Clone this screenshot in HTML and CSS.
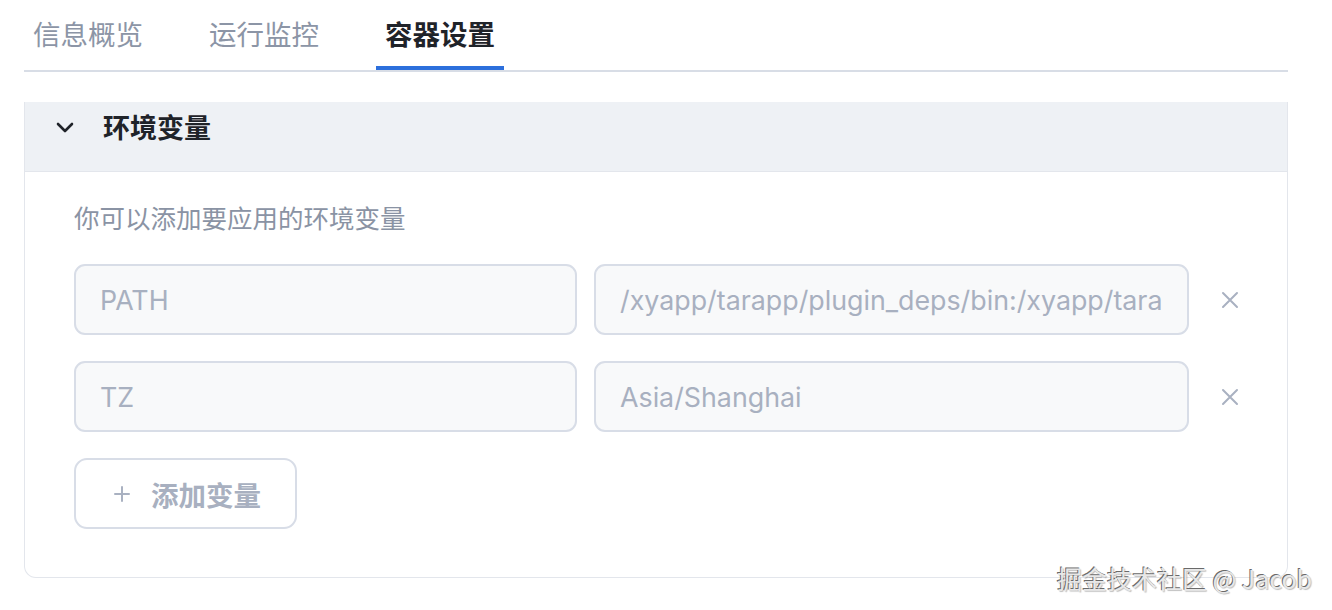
FILE: index.html
```html
<!DOCTYPE html>
<html lang="zh-CN">
<head>
<meta charset="utf-8">
<title>容器设置</title>
<link rel="stylesheet" href="styles.css">
</head>
<body>
<div class="page">
  <nav class="tabs">
    <div class="tab">信息概览</div>
    <div class="tab">运行监控</div>
    <div class="tab active">容器设置</div>
  </nav>

  <section class="panel">
    <header class="panel-head">
      <svg class="chev" width="18" height="12" viewBox="0 0 18 12"><polyline points="2,2 9,9 16,2" fill="none" stroke="#1f2329" stroke-width="2.6" stroke-linecap="round" stroke-linejoin="round"/></svg>
      <h2 class="panel-title">环境变量</h2>
    </header>
    <div class="panel-body">
      <p class="desc">你可以添加要应用的环境变量</p>
      <div class="row">
        <input class="field key" value="PATH" readonly>
        <input class="field val" value="/xyapp/tarapp/plugin_deps/bin:/xyapp/tarapp/bin:/usr/local/bin" readonly>
        <span class="del"><svg width="18" height="18" viewBox="0 0 18 18"><path d="M2 2L16 16M16 2L2 16" stroke="#a9b1c1" stroke-width="2" stroke-linecap="round"/></svg></span>
      </div>
      <div class="row">
        <input class="field key" value="TZ" readonly>
        <input class="field val" value="Asia/Shanghai" readonly>
        <span class="del"><svg width="18" height="18" viewBox="0 0 18 18"><path d="M2 2L16 16M16 2L2 16" stroke="#a9b1c1" stroke-width="2" stroke-linecap="round"/></svg></span>
      </div>
      <button class="add"><svg width="18" height="18" viewBox="0 0 18 18"><path d="M9 2V16M2 9H16" stroke="#a9b1c1" stroke-width="2" stroke-linecap="round"/></svg><span>添加变量</span></button>
    </div>
  </section>
</div>
<div class="watermark">掘金技术社区 @ Jacob</div>
</body>
</html>
```

FILE: styles.css
```css
* { box-sizing: border-box; }
html, body { margin: 0; padding: 0; background: #fff; }
body {
  font-family: "Liberation Sans", "Noto Sans CJK SC", sans-serif;
  width: 1332px;
  height: 610px;
  overflow: hidden;
  position: relative;
}
.page {
  padding-left: 24px;
  width: 1288px;
}
.tabs {
  display: flex;
  gap: 48px;
  border-bottom: 2px solid #d8dde6;
  height: 72px;
}
.tab {
  width: 128px;
  height: 70px;
  display: flex;
  align-items: center;
  justify-content: center;
  font-size: 27.5px;
  color: #8c95a6;
  font-family: "Noto Sans CJK SC", sans-serif;
  border-bottom: 4px solid transparent;
}
.tab.active {
  color: #1f2329;
  font-weight: 700;
  border-bottom-color: #2c6fdc;
}
.panel {
  margin-top: 30px;
  border: 1.5px solid #e3e6ec;
  border-top: none;
  border-radius: 0 0 12px 12px;
  width: 1264px;
}
.panel-head {
  height: 70px;
  background: #eef1f5;
  border-bottom: 1px solid #e3e6ec;
  display: flex;
  align-items: center;
  padding-left: 31px;
  padding-bottom: 20px;
}
.chev { display: block; margin-top: 3px; }
.panel-title {
  margin: 0 0 0 29px;
  font-family: "Noto Sans CJK SC", sans-serif;
  font-size: 27px;
  line-height: 36px;
  font-weight: 700;
  color: #1f2329;
}
.panel-body {
  padding: 27px 0 48px 49px;
}
.desc {
  margin: 0 0 29px 0;
  font-family: "Noto Sans CJK SC", sans-serif;
  font-size: 25.5px;
  line-height: 36px;
  color: #8a93a4;
}
.row {
  display: flex;
  align-items: center;
  gap: 17px;
  margin-bottom: 26px;
}
.field {
  height: 71px;
  border: 2px solid #d8dde7;
  border-radius: 11px;
  background: #f8f9fa;
  padding: 0 24px;
  font-family: "Inter", "Liberation Sans", "Noto Sans CJK SC", sans-serif;
  font-size: 26.8px;
  color: #a8b0c0;
  outline: none;
}
.field.key { width: 503px; }
.field.val { width: 595px; }
.del {
  width: 48px;
  display: flex;
  justify-content: center;
  align-items: center;
}
.del svg { display: block; }
.add {
  width: 223px;
  height: 71px;
  border: 2px solid #d8dde7;
  border-radius: 13px;
  background: #fff;
  display: flex;
  align-items: center;
  padding: 0 0 0 37px;
  gap: 20px;
  font-family: "Noto Sans CJK SC", sans-serif;
  font-size: 27.5px;
  font-weight: 700;
  color: #a8b0c0;
  cursor: pointer;
}
.add svg { display: block; }
.watermark {
  position: absolute;
  left: 1057px;
  top: 560px;
  font-family: "Noto Sans CJK SC", "Liberation Sans", sans-serif;
  font-size: 25px;
  line-height: 36px;
  color: #e8e8e8;
  text-shadow: -1px -1px 0 #6a6a6a, 1px 1px 1px rgba(0,0,0,0.25);
  white-space: nowrap;
}
```
